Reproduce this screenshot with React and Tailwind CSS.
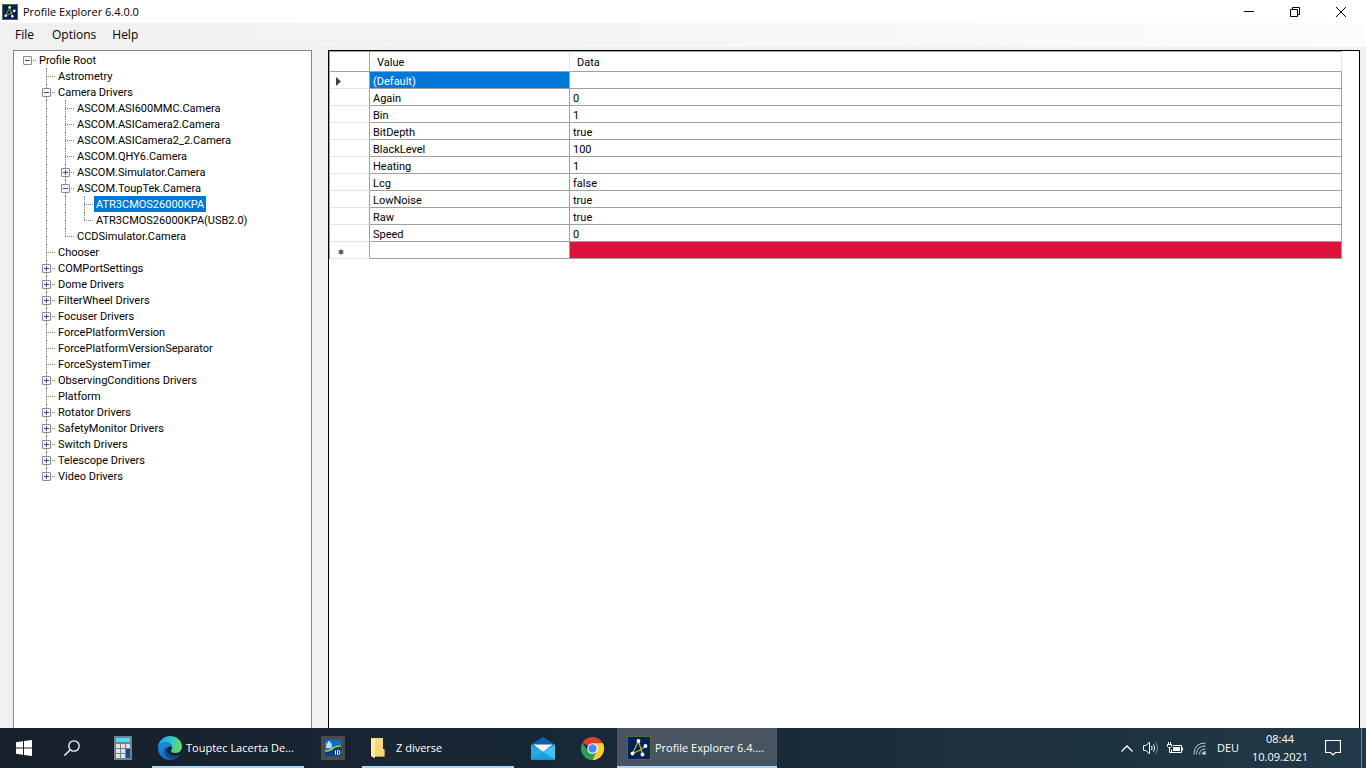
import React, { useState } from 'react';

const tree = {
    name: 'Profile Root',
    open: true,
    children: [
        { name: 'Astrometry' },
        {
            name: 'Camera Drivers',
            open: true,
            children: [
                { name: 'ASCOM.ASI600MMC.Camera' },
                { name: 'ASCOM.ASICamera2.Camera' },
                { name: 'ASCOM.ASICamera2_2.Camera' },
                { name: 'ASCOM.QHY6.Camera' },
                { name: 'ASCOM.Simulator.Camera', children: [] },
                {
                    name: 'ASCOM.ToupTek.Camera',
                    open: true,
                    children: [
                        { name: 'ATR3CMOS26000KPA' },
                        { name: 'ATR3CMOS26000KPA(USB2.0)' },
                    ],
                },
                { name: 'CCDSimulator.Camera' },
            ],
        },
        { name: 'Chooser' },
        { name: 'COMPortSettings', children: [] },
        { name: 'Dome Drivers', children: [] },
        { name: 'FilterWheel Drivers', children: [] },
        { name: 'Focuser Drivers', children: [] },
        { name: 'ForcePlatformVersion' },
        { name: 'ForcePlatformVersionSeparator' },
        { name: 'ForceSystemTimer' },
        { name: 'ObservingConditions Drivers', children: [] },
        { name: 'Platform' },
        { name: 'Rotator Drivers', children: [] },
        { name: 'SafetyMonitor Drivers', children: [] },
        { name: 'Switch Drivers', children: [] },
        { name: 'Telescope Drivers', children: [] },
        { name: 'Video Drivers', children: [] },
    ],
};

const values = [
    ['(Default)', ''],
    ['Again', '0'],
    ['Bin', '1'],
    ['BitDepth', 'true'],
    ['BlackLevel', '100'],
    ['Heating', '1'],
    ['Lcg', 'false'],
    ['LowNoise', 'true'],
    ['Raw', 'true'],
    ['Speed', '0'],
];

const AppIcon = ({ className }) => (
    <svg viewBox="0 0 24 24" className={className}>
        <rect x="0.5" y="0.5" width="23" height="23" fill="#04215a" stroke="#5c6430" />
        <path d="M15.5 18.5 11.500 5 5.500 17.500 13.500 14 18.500 10" fill="none" stroke="#b9be22" strokeWidth="1.200" />
        <g fill="#fff">
            <circle cx="5.500" cy="17.500" r="1.900" />
            <circle cx="11.500" cy="5" r="1.900" />
            <circle cx="15.500" cy="18.500" r="1.900" />
            <circle cx="18.500" cy="10" r="1.900" />
        </g>
    </svg>
);

// Uma célula de 19px com as linhas pontilhadas da árvore
const Guide = ({ up, down, across }) => (
    <span className="flex h-4 w-[19px] shrink-0 pl-[9px] pr-px">
        <span className="flex flex-1 flex-col">
            <span className={`h-2 border-dotted border-[#808080] ${up ? 'border-l' : ''}`} />
            <span className={`h-2 border-dotted border-[#808080] ${down ? 'border-l' : ''} ${across ? 'border-t' : ''}`} />
        </span>
    </span>
);

const TreeNode = ({ node, trail, last, root, selected, onSelect }) => {
    const [open, setOpen] = useState(Boolean(node.open));
    const isSelected = selected === node.name;

    return (
        <li>
            <div className="flex h-4 items-center">
                {trail.map((line, i) => <Guide key={i} up={line} down={line} />)}
                <span className="relative shrink-0">
                    <Guide up={!root} down={!last} across />
                    {node.children && (
                        <button
                            onClick={() => setOpen(!open)}
                            aria-label={open ? 'Collapse' : 'Expand'}
                            className="absolute left-[5px] top-1 h-[9px] w-[9px]"
                        >
                            <svg viewBox="0 0 9 9" className="block h-full w-full">
                                <rect x="0.5" y="0.5" width="8" height="8" rx="0.5" fill="#f6f6f6" stroke="#8c8c8c" />
                                <path d={open ? 'M2 4.5H7' : 'M2 4.5H7M4.5 2V7'} stroke="#3450a8" />
                            </svg>
                        </button>
                    )}
                </span>
                <button
                    onClick={() => onSelect(node.name)}
                    className={`h-4 px-0.5 pt-0.5 leading-[14px] whitespace-nowrap ${isSelected ? 'bg-[#0078d7] text-white' : ''}`}
                >
                    {node.name}
                </button>
            </div>
            {open && node.children && (
                <ul>
                    {node.children.map((child, i) => (
                        <TreeNode
                            key={child.name}
                            node={child}
                            trail={[...trail, !last]}
                            last={i === node.children.length - 1}
                            selected={selected}
                            onSelect={onSelect}
                        />
                    ))}
                </ul>
            )}
        </li>
    );
};

const TitleBar = () => (
    <header className="flex h-[23px] shrink-0 items-center bg-white pl-0.5 pr-0.5">
        <AppIcon className="h-4 w-4" />
        <h1 className="ml-[5px] flex-1 pt-px text-[11px]">Profile Explorer 6.4.0.0</h1>
        <button aria-label="Minimize" className="flex h-full w-[46px] items-center justify-center">
            <svg viewBox="0 0 10 10" className="h-2.5 w-2.5"><path d="M0 4.5H10" stroke="#000" /></svg>
        </button>
        <button aria-label="Restore" className="flex h-full w-[46px] items-center justify-center">
            <svg viewBox="0 0 10 10" className="h-2.5 w-2.5">
                <path d="M0.5 2.5H7.5V9.5H0.5ZM2.5 2.5V0.5H9.5V7.5H7.5" fill="none" stroke="#000" />
            </svg>
        </button>
        <button aria-label="Close" className="flex h-full w-[46px] items-center justify-center">
            <svg viewBox="0 0 10 10" className="h-2.5 w-2.5"><path d="M0 0 10 10M10 0 0 10" stroke="#000" /></svg>
        </button>
    </header>
);

const ValueTable = () => (
    <table className="w-full table-fixed border-separate border-spacing-0 border-l border-t border-[#a0a0a0] text-left">
        <colgroup>
            <col className="w-[40px]" />
            <col className="w-[200px]" />
            <col />
        </colgroup>
        <thead>
            <tr className="h-5">
                <th className="border-b border-r border-[#a0a0a0] p-0"></th>
                <th className="border-b border-r border-b-[#a0a0a0] border-r-[#e3e3e3] p-0 pl-[7px] pt-0.5 leading-4 font-normal">Value</th>
                <th className="border-b border-r border-b-[#a0a0a0] border-r-[#e3e3e3] p-0 pl-[7px] pt-0.5 leading-4 font-normal">Data</th>
            </tr>
        </thead>
        <tbody>
            {values.map(([name, data], i) => (
                <tr key={name} className="h-[17px]">
                    <td className="border-b border-r border-b-[#e3e3e3] border-r-[#a0a0a0] p-0 pl-1.5 pt-0.5">
                        {i === 0 && (
                            <svg viewBox="0 0 5 9" className="block h-[9px] w-[5px]"><path d="M0 0 5 4.5 0 9Z" fill="#404040" /></svg>
                        )}
                    </td>
                    <td className={`border-b border-r border-[#a0a0a0] p-0 pl-[3px] pt-1 leading-3 ${i === 0 ? 'bg-[#0078d7] text-white' : ''}`}>{name}</td>
                    <td className="border-b border-r border-[#a0a0a0] p-0 pl-[3px] pt-1 leading-3">{data}</td>
                </tr>
            ))}
            {/* Linha nova */}
            <tr className="h-[17px]">
                <td className="border-b border-r border-b-[#e3e3e3] border-r-[#a0a0a0] p-0 pl-2 pt-[3px]">
                    <svg viewBox="0 0 6 6" className="block h-1.5 w-1.5">
                        <circle cx="3" cy="3" r="2" fill="#404040" />
                        <path d="M3 0V6M0 1.500 6 4.500M6 1.500 0 4.500" stroke="#606060" strokeWidth="0.800" />
                    </svg>
                </td>
                <td className="border-b border-r border-[#a0a0a0] p-0"></td>
                <td className="border-b border-r border-[#a0a0a0] bg-[#dc143c] p-0"></td>
            </tr>
        </tbody>
    </table>
);

const Calculator = () => (
    <svg viewBox="0 0 18 24" className="h-6 w-[18px]">
        <rect width="18" height="24" rx="0.5" fill="#76818c" />
        <rect x="2" y="2" width="14" height="4" fill="#50dcff" />
        <g fill="#dfe3e8">
            <rect x="2" y="8" width="4" height="4" /><rect x="7" y="8" width="4" height="4" /><rect x="12" y="8" width="4" height="4" />
            <rect x="2" y="13" width="4" height="4" /><rect x="7" y="13" width="4" height="4" />
            <rect x="2" y="18" width="4" height="4" /><rect x="7" y="18" width="4" height="4" />
        </g>
        <rect x="12" y="13" width="4" height="9" fill="#124a8c" />
    </svg>
);

const Edge = () => (
    <svg viewBox="0 0 24 24" className="h-6 w-6">
        <defs>
            <linearGradient id="edgeTop" x1="0" y1="0.3" x2="1" y2="0.5">
                <stop offset="0" stopColor="#1f9be4" />
                <stop offset="0.5" stopColor="#32c3c9" />
                <stop offset="1" stopColor="#66e155" />
            </linearGradient>
            <linearGradient id="edgeSide" x1="0" y1="0" x2="0.4" y2="1">
                <stop offset="0" stopColor="#1b91df" />
                <stop offset="1" stopColor="#1268c0" />
            </linearGradient>
        </defs>
        <path d="M0 12C0 5 5.5 0 12 0c7 0 12 5 12 10.500c0 4-3 6.500-6.500 6.500-2.600 0-4.500-1-4.500-2 0-.7 1.200-1.200 1.200-3.200C14.200 8.500 11 6.500 8 6.500 4 6.500 1 9 0 12Z" fill="url(#edgeTop)" />
        <path d="M0 12C.8 8.800 4 6.500 8 6.500c3 0 6.200 2 6.200 5.300-1-1.200-2.200-1.600-3.200-1.300-2 .7-3 3-2.500 5.500.6 3.400 3.500 5.700 7 5.700 2 0 4-.6 5.700-1.900C19 22.500 15.800 24 12 24 5 24 0 18.500 0 12Z" fill="url(#edgeSide)" />
        <path d="M8.500 10.500C6.600 12 6 14.300 6.500 16.800c.8 3.600 3.900 6.600 8 6.900 2.900-.6 5.300-2.100 6.900-4.300.3-.6-.2-.8-.7-.5-1.400.8-2.900 1.100-4.500.9-4-.3-7.300-3-7.700-7Z" fill="#114a8b" />
    </svg>
);

const RemoteTool = () => (
    <svg viewBox="0 0 24 24" className="h-6 w-6">
        <rect width="24" height="24" fill="#4b4b4b" />
        <rect x="4" y="4" width="16" height="16" rx="1.5" fill="#086fc2" />
        <path d="M4 15 11 15 14 11 20 9.500V18.500a1.500 1.500 0 0 1-1.500 1.500H5.500A1.500 1.500 0 0 1 4 18.500Z" fill="#073f83" />
        <path d="M4 15C12 16 9 9.500 20 10" fill="none" stroke="#f1d81c" strokeWidth="1.200" />
        <path d="M5.500 7.500H10.500V12H5.500ZM7 7.500V5.500H9V7.500" fill="#b9def5" stroke="#b9def5" strokeWidth="0.600" />
        <path d="M14.500 14.500V18.500M16.500 14.500V18.500H17.500Q18.800 18.500 18.800 16.500T17.500 14.500Z" fill="none" stroke="#fff" />
    </svg>
);

const Folder = () => (
    <svg viewBox="0 0 14 20" className="h-5 w-3.5">
        <path d="M0 0H12V11H13.500V18.500H3V20L0 18Z" fill="#fbdc83" />
        <path d="M0 0 4 2V20L0 18Z" fill="#ffeaa6" />
        <path d="M4 2V18.500H13.500V12H12" fill="#f7d06c" opacity="0.600" />
    </svg>
);

const Mail = () => (
    <svg viewBox="0 0 24 23" className="h-[23px] w-6">
        <path d="M0 7.500 12 0 24 7.500 12 17Z" fill="#0864b4" />
        <path d="M2 7.500H22L12 15Z" fill="#f4f4f4" />
        <path d="M0 7.500 12 15 0 22.500Z" fill="#27a9e8" />
        <path d="M24 7.500V22.500H0Z" fill="#3cc2f4" />
        <path d="M0 22.500 12 15 24 22.500Z" fill="#1b9fe5" />
    </svg>
);

const Chrome = () => (
    <svg viewBox="0 0 24 24" className="h-[23px] w-[23px]">
        <path d="M12 12 1.600 6A12 12 0 0 1 22.400 6Z" fill="#e33b2e" />
        <path d="M12 12 22.400 6A12 12 0 0 1 12 24Z" fill="#fccd3a" />
        <path d="M12 6.500H22.600A12 12 0 0 1 12 24L16.800 14.700Z" fill="#fccd3a" />
        <path d="M1.600 6A12 12 0 0 0 12 24L16.800 14.700 12 17.500 7.200 14.700Z" fill="#25a056" />
        <circle cx="12" cy="12" r="5.500" fill="#fff" />
        <circle cx="12" cy="12" r="4.400" fill="#4688f1" />
    </svg>
);

const Taskbar = () => (
    <footer className="flex h-10 shrink-0 items-stretch bg-linear-to-r from-[#18202d] via-[#182937] to-[#213948] text-[11px] text-white">
        <button aria-label="Start" className="flex w-12 items-center justify-center">
            <svg viewBox="0 0 16 16" className="h-4 w-4">
                <path d="M0 2.300 7 1.300V7.600H0ZM8 1.100 16 0V7.600H8ZM0 8.500H7V14.800L0 13.800ZM8 8.500H16V16L8 15Z" fill="#fff" />
            </svg>
        </button>
        <button aria-label="Search" className="flex w-12 items-center justify-center">
            <svg viewBox="0 0 16 16" className="h-4 w-4" fill="none" stroke="#fff" strokeWidth="1.300">
                <circle cx="10" cy="6" r="5.200" />
                <path d="M6.300 9.700 0.400 15.600" />
            </svg>
        </button>
        <button aria-label="Calculator" className="ml-[3px] flex w-12 items-center justify-center"><Calculator /></button>
        <button className="ml-[5px] flex w-[152px] items-center border-b-2 border-[#a6d8ff] pl-1.5 pt-0.5">
            <Edge />
            <span className="ml-1 whitespace-nowrap">Touptec Lacerta De...</span>
        </button>
        <button aria-label="Remote" className="ml-[5px] flex w-12 items-center justify-center"><RemoteTool /></button>
        <button className="ml-[5px] flex w-[152px] items-center border-b-2 border-[#a6d8ff] pl-[9px] pt-0.5">
            <Folder />
            <span className="ml-[11px] whitespace-nowrap">Z diverse</span>
        </button>
        <button aria-label="Mail" className="ml-[5px] flex w-12 items-center justify-center"><Mail /></button>
        <button aria-label="Chrome" className="flex w-[50px] items-center justify-center"><Chrome /></button>
        <button className="flex w-40 items-center border-b-2 border-[#a6d8ff] bg-[#48545f] pl-2.5 pt-0.5">
            <AppIcon className="h-6 w-6" />
            <span className="ml-1 whitespace-nowrap">Profile Explorer 6.4....</span>
        </button>

        {/* Área de notificação */}
        <div className="ml-auto flex items-center">
            <button aria-label="Hidden icons" className="flex w-6 justify-center">
                <svg viewBox="0 0 12 7" className="h-[7px] w-3"><path d="M0.500 6.500 6 1 11.500 6.500" fill="none" stroke="#fff" strokeWidth="1.300" /></svg>
            </button>
            <button aria-label="Volume" className="flex w-6 justify-center">
                <svg viewBox="0 0 16 14" className="h-3.5 w-4" fill="none" stroke="#fff">
                    <path d="M0.500 4.500H3L6.500 1V13L3 9.500H0.500Z" />
                    <path d="M8.500 5Q9.700 7 8.500 9M10.500 3.500Q12.800 7 10.500 10.500" />
                    <path d="M12.500 1.500Q16.500 7 12.500 12.500" stroke="#7f8d97" />
                </svg>
            </button>
            <button aria-label="Battery" className="flex w-6 justify-center">
                <svg viewBox="0 0 16 12" className="h-3 w-4" fill="none" stroke="#fff">
                    <path d="M6 3.500H14.500V10.500H4.500V7.500M15.500 5.500V8.500M1.500 0V2M3.500 0V2M0.500 2.500H4.500V4.500L3.500 5.500H1.500L0.500 4.500ZM2.500 5.500V10.500H4.500" />
                    <path d="M6 5H13V9H6Z" fill="#fff" stroke="none" />
                </svg>
            </button>
            <button aria-label="Network" className="flex w-6 justify-center">
                <svg viewBox="0 0 13 13" className="h-[13px] w-[13px]" fill="none" stroke="#c5cdd2">
                    <path d="M1 12.500Q1 1 12.500 1M3.500 12.500Q3.500 4 12.500 4M6.500 12.500Q6.500 7 12.500 7M9 12.500Q9 9.500 12.500 9.500" />
                    <circle cx="11.500" cy="11.500" r="1.200" fill="#fff" stroke="none" />
                </svg>
            </button>
            <button className="w-[34px] text-center">DEU</button>
            <button className="w-[70px] text-center leading-[18px]">
                <time className="block">08:44</time>
                <time className="block">10.09.2021</time>
            </button>
            <button aria-label="Notifications" className="flex w-[35px] justify-center">
                <svg viewBox="0 0 16 16" className="h-4 w-4"><path d="M0.500 0.500H15.500V12.500H10.500L8 15 5.500 12.500H0.500Z" fill="none" stroke="#fff" strokeWidth="1.200" /></svg>
            </button>
            <span className="ml-[11px] h-10 w-[5px] border-l border-[#73828c]" />
        </div>
    </footer>
);

const App = () => {
    const [selected, setSelected] = useState('ATR3CMOS26000KPA');

    return (
        <div className="flex h-screen flex-col overflow-hidden bg-[#f0f0f0] font-['Open_Sans',sans-serif] text-black">
            <TitleBar />
            <nav className="flex h-6 shrink-0 items-center bg-linear-to-r from-[#f0f0f0] to-[#fcfcfc] pl-[9px] text-[12px]">
                <button className="px-1.5">File</button>
                <button className="ml-[6px] px-1.5">Options</button>
                <button className="ml-1 px-1.5">Help</button>
            </nav>
            <main className="flex min-h-0 flex-1 gap-4 pl-[13px] pr-1.5 pt-[3px] font-[Roboto,'Liberation_Sans',sans-serif] text-[11px]">
                <section className="w-[299px] shrink-0 overflow-hidden border border-b-0 border-[#828790] bg-white pl-1 pt-px">
                    <ul>
                        <TreeNode node={tree} trail={[]} root last selected={selected} onSelect={setSelected} />
                    </ul>
                </section>
                <section className="min-w-0 flex-1 overflow-hidden border border-b-0 border-black bg-white pr-[17px]">
                    <ValueTable />
                </section>
            </main>
            <Taskbar />
        </div>
    );
};

export default App;
